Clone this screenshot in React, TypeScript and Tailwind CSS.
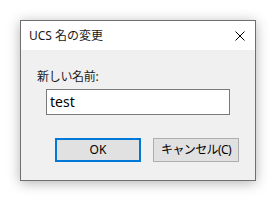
import { type ReactElement } from 'react';

/**
 * Rename UCS dialog (Windows style)
 */
export default function App(): ReactElement {
  return (
    <div
      className="w-[277px] h-[201px] bg-white pt-[20px] pl-[20px]"
      style={{ fontFamily: '"Segoe UI", "Noto Sans", "Noto Sans CJK JP", sans-serif' }}
    >
      <div className="w-[236px] h-[161px] border border-[#6f6f6f] bg-[#f0f0f0] flex flex-col shadow-[0_2px_12px_rgba(0,0,0,0.3)]">
        <div className="h-[29px] bg-white flex items-center justify-between pl-[8px] pr-[10px]">
          <span className="text-[12px] text-[#1a1a1a] leading-none">UCS 名の変更</span>
          <svg width="10" height="10" viewBox="0 0 10 10" className="text-black">
            <path d="M0.5 0.5 L9.5 9.5 M9.5 0.5 L0.5 9.5" stroke="currentColor" strokeWidth="1" />
          </svg>
        </div>
        <div className="flex-1 flex flex-col pl-[16px]">
          <div className="mt-[20px] text-[12px] leading-[14px] text-[#1a1a1a] tracking-[-0.3px]">新しい名前:</div>
          <div className="mt-[5px] ml-[9px] w-[184px] h-[26px] bg-white border border-[#7a7a7a] flex items-center pl-[3px]">
            <span className="text-[14px] text-black leading-none">test</span>
          </div>
          <div className="mt-[23px] ml-[18px] flex gap-[12px]">
            <div className="w-[86px] h-[24px] border-2 border-[#0078d7] bg-[#e1e1e1] flex items-center justify-center text-[12px] text-black">
              OK
            </div>
            <div className="w-[86px] h-[24px] border border-[#adadad] bg-[#e1e1e1] flex items-center justify-center text-[12px] text-black tracking-[-0.6px]">
              キャンセル(C)
            </div>
          </div>
        </div>
      </div>
    </div>
  );
}
